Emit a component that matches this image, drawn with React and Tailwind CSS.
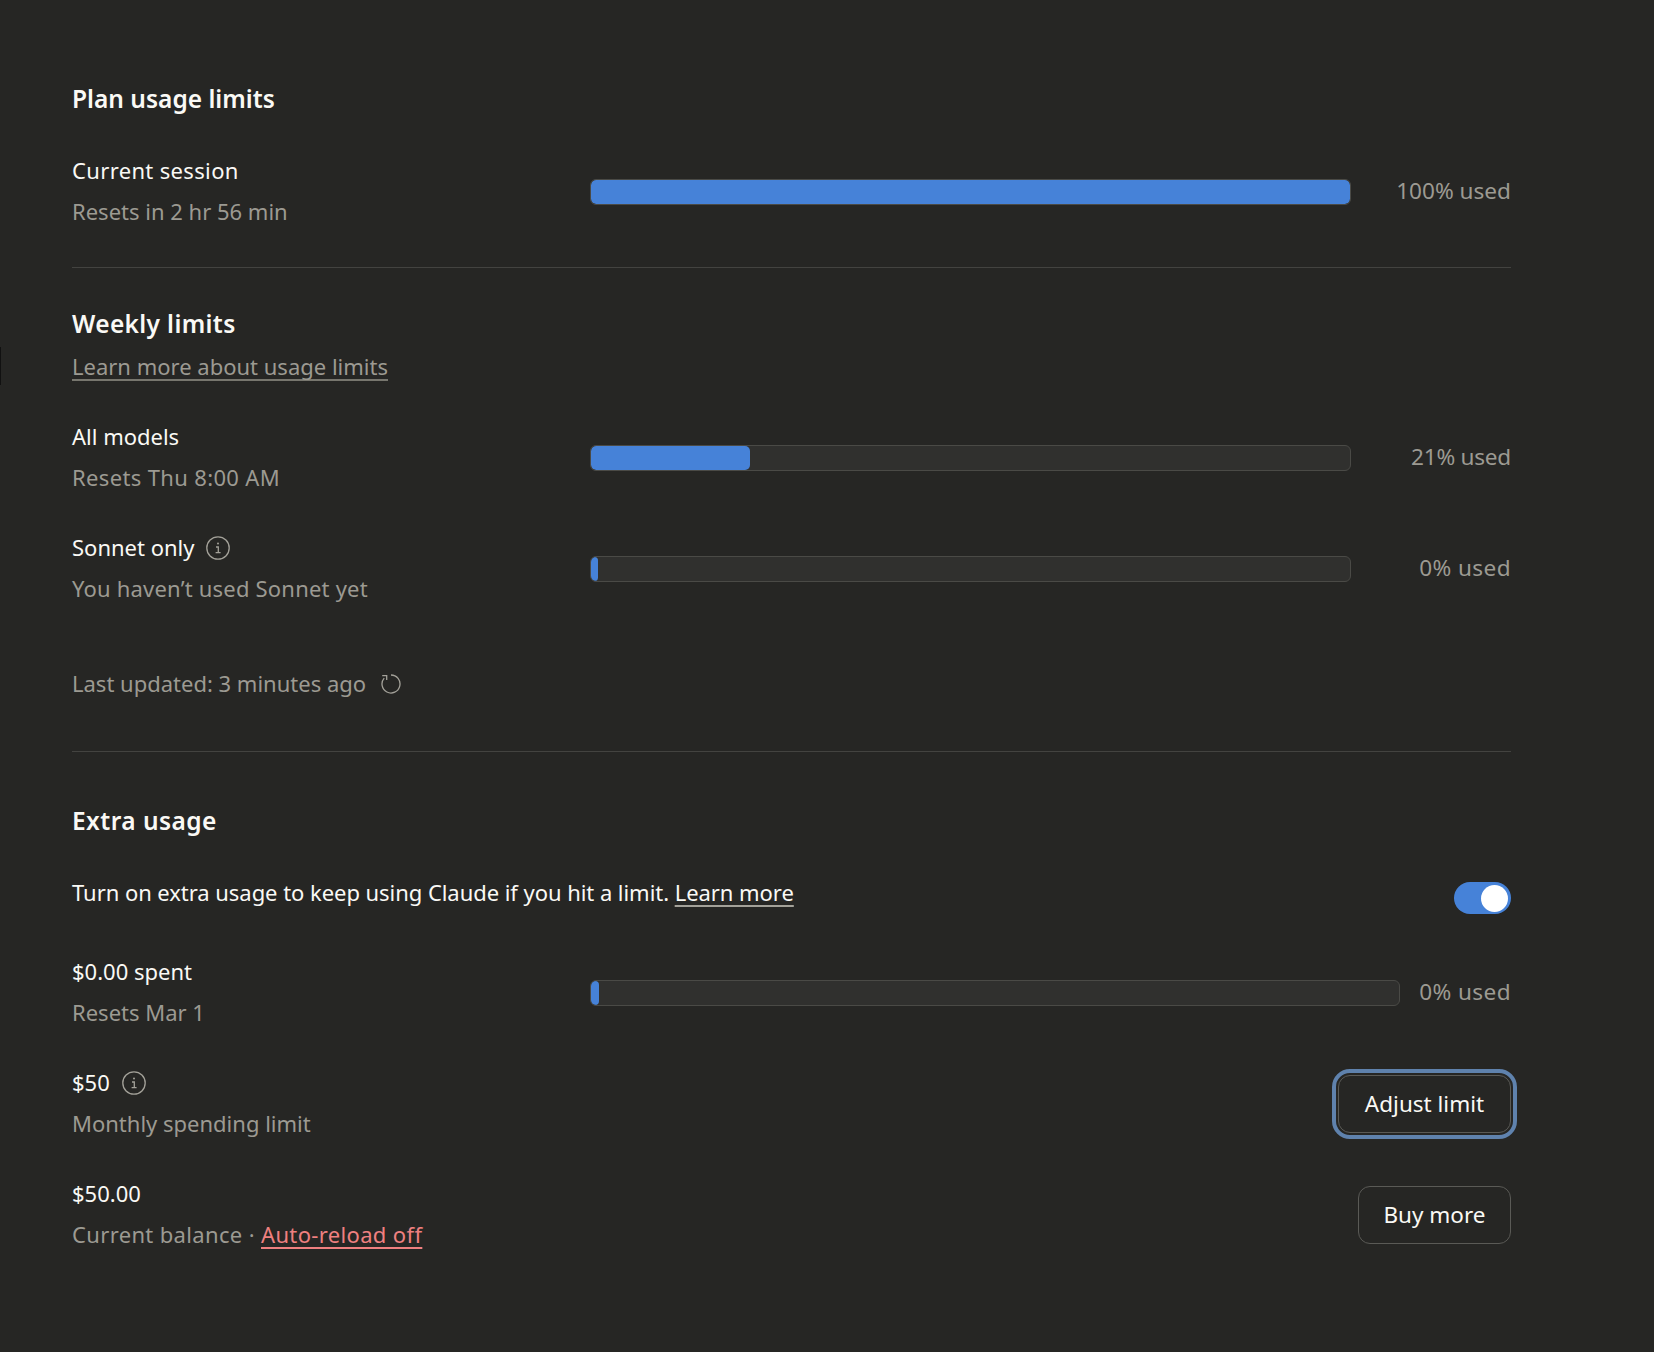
function Info() {
  return (
    <svg width="24" height="24" viewBox="0 0 24 24" fill="none" stroke="#a3a199" className="shrink-0">
      <circle cx="12" cy="12" r="11.2" strokeWidth="1.3" />
      <circle cx="12" cy="7.6" r="1" fill="#a3a199" stroke="none" />
      <path d="M10 11h2.3v5.6M9.6 16.6h5" strokeWidth="1.3" />
    </svg>
  );
}
function Refresh() {
  return (
    <svg width="20" height="20" viewBox="0 0 20 20" fill="none" stroke="#a3a199" strokeWidth="1.3" className="shrink-0">
      <path d="M10 1A9 9 0 1 1 3.2 4.1" />
      <path d="M1.2 1.7H5.7V5.9" />
    </svg>
  );
}
function Bar({ pct, w = 'w-[762px]' }) {
  return (
    <div className={`${w} mt-[1px] h-[26px] rounded-[6px] border border-[#4a4a46] bg-[#30302e] overflow-hidden`}>
      <div className="h-full rounded-[5px] bg-[#4682d8]" style={{ width: pct }} />
    </div>
  );
}
function Label({ title, sub, icon }) {
  return (
    <div className="w-[518px] shrink-0 text-[22px] leading-[41px]">
      <div className="flex items-center gap-[12px] text-[#faf9f5]">{title}{icon && <Info />}</div>
      <div className="text-[#9c9a92]">{sub}</div>
    </div>
  );
}
function Row({ title, sub, icon, pct, used, barW, usedW, usedClass }) {
  return (
    <div className="flex items-center">
      <Label title={title} sub={sub} icon={icon} />
      <Bar pct={pct} w={barW} />
      <div className={`${usedW || 'w-[160px]'} ${usedClass || ''} text-right text-[22.6px] leading-[32px] text-[#9c9a92]`}>{used}</div>
    </div>
  );
}
export default function App() {
  return (
    <div className="relative min-h-screen bg-[#262624] pl-[72px] pr-[143px] pt-[78px]" style={{ fontFamily: '"Noto Sans", sans-serif' }}>
      <div className="absolute left-0 top-[347px] h-[38px] w-[1px] bg-[#111]" />
      <h2 className="text-[24.5px] leading-[42px] font-semibold text-[#faf9f5]">Plan usage limits</h2>
      <div className="mt-[30px]">
        <Row title={<span className="tracking-[0.35px]">Current session</span>} sub="Resets in 2 hr 56 min" pct="100%" used="100% used" />
      </div>
      <div className="mt-[35px] border-t border-[#434340]" />
      <h2 className="mt-[35px] text-[24.5px] leading-[42px] font-semibold tracking-[0.35px] text-[#faf9f5]">Weekly limits</h2>
      <a className="mt-[1px] block w-fit text-[22px] leading-[41px] text-[#9c9a92] underline decoration-[#77766e] underline-offset-4 [text-decoration-skip-ink:none]">Learn more about usage limits</a>
      <div className="mt-[29px] flex flex-col gap-[29px]">
        <Row title="All models" sub={<span className="tracking-[0.35px]">Resets Thu 8:00 AM</span>} pct="21%" used="21% used" usedClass="tracking-[-0.25px]" />
        <Row title="Sonnet only" sub={<span className="tracking-[0.2px]">You haven’t used Sonnet yet</span>} icon pct="7px" used="0% used" usedClass="tracking-[0.4px]" />
      </div>
      <div className="mt-[54px] flex items-center gap-[15px] text-[22px] leading-[41px] text-[#9c9a92]">Last updated: 3 minutes ago <Refresh /></div>
      <div className="mt-[47px] border-t border-[#434340]" />
      <h2 className="mt-[48px] text-[24.5px] leading-[42px] font-semibold tracking-[0.45px] text-[#faf9f5]">Extra usage</h2>
      <div className="mt-[30px] flex items-start justify-between">
        <div className="text-[22px] leading-[41px] tracking-[-0.05px] text-[#faf9f5]">Turn on extra usage to keep using Claude if you hit a limit. <a className="underline decoration-[#a3a199] underline-offset-4 [text-decoration-skip-ink:none]">Learn more</a></div>
        <div className="mt-[10px] flex h-[32px] w-[57px] items-center justify-end rounded-full bg-[#4682d8] pr-[3px]"><div className="h-[27px] w-[27px] rounded-full bg-white" /></div>
      </div>
      <div className="mt-[37px] flex flex-col gap-[29px]">
        <Row title="$0.00 spent" sub="Resets Mar 1" pct="8px" used="0% used" barW="w-[811px]" usedW="w-[111px]" usedClass="tracking-[0.4px]" />
        <div className="flex items-center justify-between">
          <Label title="$50" sub="Monthly spending limit" icon />
          <button className="mt-[2px] h-[58px] w-[173px] rounded-[12px] border border-[#5a5a56] text-[22.5px] text-[#faf9f5] outline-[4px] outline-offset-[2px] outline-[#5f82ad]">Adjust limit</button>
        </div>
        <div className="flex items-center justify-between">
          <Label title="$50.00" sub={<span className="tracking-[0.35px]">Current balance · <a className="text-[#ef8080] underline underline-offset-4 [text-decoration-skip-ink:none]">Auto-reload off</a></span>} />
          <button className="mt-[2px] h-[58px] w-[153px] rounded-[12px] border border-[#5a5a56] text-[22.5px] text-[#faf9f5]">Buy more</button>
        </div>
      </div>
    </div>
  );
}
